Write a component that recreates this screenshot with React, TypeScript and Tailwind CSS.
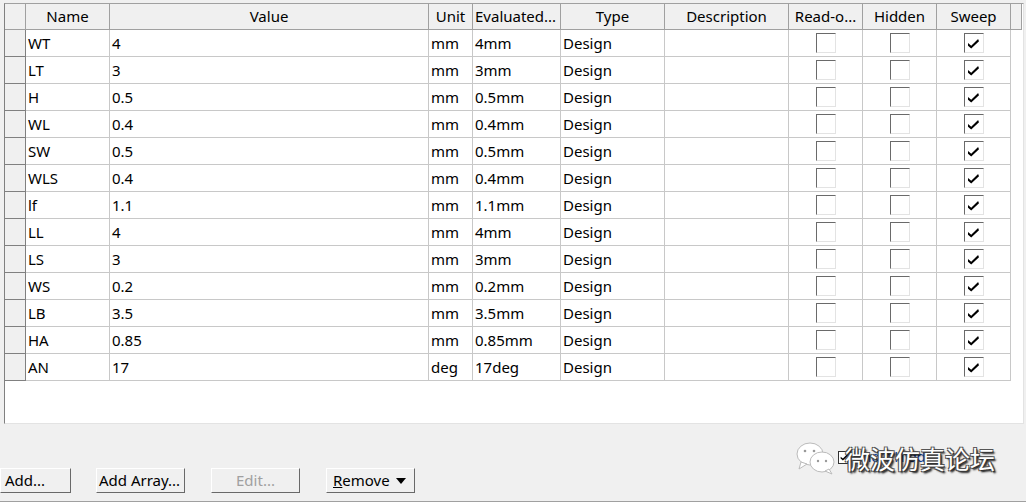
import React from "react";

const rows: [string, string, string, string][] = [
  ["WT", "4", "mm", "4mm"],
  ["LT", "3", "mm", "3mm"],
  ["H", "0.5", "mm", "0.5mm"],
  ["WL", "0.4", "mm", "0.4mm"],
  ["SW", "0.5", "mm", "0.5mm"],
  ["WLS", "0.4", "mm", "0.4mm"],
  ["lf", "1.1", "mm", "1.1mm"],
  ["LL", "4", "mm", "4mm"],
  ["LS", "3", "mm", "3mm"],
  ["WS", "0.2", "mm", "0.2mm"],
  ["LB", "3.5", "mm", "3.5mm"],
  ["HA", "0.85", "mm", "0.85mm"],
  ["AN", "17", "deg", "17deg"],
];

function Tick({ w, h }: { w: number; h: number }) {
  return (
    <svg width={w} height={h} viewBox="0 0 14 12">
      <path d="M1 5.5 L4.5 8.5 L12 1 L13 3.5 L4.5 11.5 L1 8.5 Z" fill="#000" />
    </svg>
  );
}

function Box({ checked }: { checked?: boolean }) {
  return (
    <div className="w-[20px] h-[20px] bg-white border border-t-[#6a6a6a] border-l-[#6a6a6a] border-r-[#e3e3e3] border-b-[#e3e3e3] flex items-center justify-center">
      {checked && <Tick w={13} h={11} />}
    </div>
  );
}

function Hdr({ w, children, left }: { w: string; children?: React.ReactNode; left?: boolean }) {
  return (
    <div
      className={`${w} h-full shrink-0 bg-[#f0f0f0] border-r border-b border-r-[#a0a0a0] border-b-[#a0a0a0] flex items-center ${left ? "justify-start pl-[2px]" : "justify-center"} text-[#000] overflow-hidden whitespace-nowrap`}
    >
      {children}
    </div>
  );
}

function Btn({ children, disabled, className }: { children: React.ReactNode; disabled?: boolean; className?: string }) {
  return (
    <div
      className={`h-[25px] shrink-0 bg-[#f0f0f0] border border-t-white border-l-white border-r-[#696969] border-b-[#696969] flex items-center whitespace-nowrap ${disabled ? "text-[#a0a0a0]" : "text-black"} ${className ?? ""}`}
    >
      {children}
    </div>
  );
}

export default function App() {
  const font = { fontFamily: '"Noto Sans", "Noto Sans CJK SC", sans-serif' };
  return (
    <div className="w-[1026px] h-[503px] bg-[#f0f0f0] relative overflow-hidden text-[15px] leading-none flex flex-col" style={font}>
      <div className="pt-[3px] pl-[4px] pr-[2px] h-[424px] shrink-0">
        <div className="h-[421px] bg-white border border-t-[#a0a0a0] border-l-[#808080] border-r-[#e3e3e3] border-b-[#e3e3e3] overflow-hidden">
          <div className="flex h-[26px]">
            <Hdr w="w-[21px]"> </Hdr>
            <Hdr w="w-[84px]">Name</Hdr>
            <Hdr w="w-[319px]">Value</Hdr>
            <Hdr w="w-[44px]">Unit</Hdr>
            <Hdr w="w-[88px]" left>Evaluated...</Hdr>
            <Hdr w="w-[104px]">Type</Hdr>
            <Hdr w="w-[124px]">Description</Hdr>
            <Hdr w="w-[74px]">Read-o...</Hdr>
            <Hdr w="w-[74px]">Hidden</Hdr>
            <Hdr w="w-[74px]">Sweep</Hdr>
            <Hdr w="w-[11px]"> </Hdr>
          </div>
          {rows.map((r) => (
            <div key={r[0]} className="flex h-[27px]">
              <div className="w-[21px] shrink-0 bg-[#f0f0f0] border-r border-b border-r-[#808080] border-b-[#808080]" />
              <div className="w-[84px] shrink-0 border-r border-b border-[#c8c8c8] flex items-center pl-[2px]">{r[0]}</div>
              <div className="w-[319px] shrink-0 border-r border-b border-[#c8c8c8] flex items-center pl-[2px]">{r[1]}</div>
              <div className="w-[44px] shrink-0 border-r border-b border-[#c8c8c8] flex items-center pl-[2px]">{r[2]}</div>
              <div className="w-[88px] shrink-0 border-r border-b border-[#c8c8c8] flex items-center pl-[2px]">{r[3]}</div>
              <div className="w-[104px] shrink-0 border-r border-b border-[#c8c8c8] flex items-center pl-[2px]">Design</div>
              <div className="w-[124px] shrink-0 border-r border-b border-[#c8c8c8]" />
              <div className="w-[74px] shrink-0 border-r border-b border-[#c8c8c8] flex items-center justify-center"><Box /></div>
              <div className="w-[74px] shrink-0 border-r border-b border-[#c8c8c8] flex items-center justify-center"><Box /></div>
              <div className="w-[74px] shrink-0 border-r border-b border-[#c8c8c8] flex items-center justify-center"><Box checked /></div>
            </div>
          ))}
        </div>
      </div>

      {/* show checkbox row */}
      <div className="h-[44px] shrink-0 flex items-center pt-[22px] pl-[838px] gap-[4px]">
        <div className="w-[13px] h-[13px] bg-white border border-[#333] flex items-center justify-center">
          <Tick w={9} h={8} />
        </div>
        <span className="text-[#0a3fa0] text-[14px]">Show Hidden</span>
      </div>

      {/* buttons */}
      <div className="flex h-[25px] shrink-0">
        <Btn className="w-[71px] pl-[4px]">Add...</Btn>
        <Btn className="w-[89px] ml-[25px] pl-[2px]">Add Array...</Btn>
        <Btn disabled className="w-[89px] ml-[26px] justify-center">Edit...</Btn>
        <Btn className="w-[89px] ml-[26px] pl-[6px] gap-[6px]">
          <span><span className="underline">R</span>emove</span>
          <svg width="10" height="6" viewBox="0 0 10 6"><path d="M0 0 H10 L5 6 Z" fill="#000" /></svg>
        </Btn>
      </div>
      <div className="flex-1" />
      <div className="h-[2px] shrink-0 border-t border-[#a0a0a0] bg-white" />

      {/* watermark */}
      <div className="absolute left-[795px] top-[441px] flex items-center gap-[8px] pointer-events-none">
        <svg width="42" height="34" viewBox="0 0 42 34">
          <ellipse cx="15" cy="13" rx="13" ry="11" fill="#fff" stroke="#bbb" strokeWidth="1" />
          <path d="M6 21 L4 28 L12 23 Z" fill="#fff" stroke="#bbb" strokeWidth="1" />
          <circle cx="10" cy="10" r="1.3" fill="#999" />
          <circle cx="19" cy="10" r="1.3" fill="#999" />
          <ellipse cx="27" cy="21" rx="12" ry="10" fill="#fff" stroke="#bbb" strokeWidth="1" />
          <path d="M34 28 L37 33 L30 30 Z" fill="#fff" stroke="#bbb" strokeWidth="1" />
          <circle cx="23" cy="20" r="1.2" fill="#999" />
          <circle cx="31" cy="20" r="1.2" fill="#999" />
        </svg>
        <span
          className="text-[25px] text-white leading-none [text-shadow:1px_1px_0_#333,-1px_-1px_0_#555,1px_-1px_0_#555,-1px_1px_0_#555,2px_2px_2px_#000]"
          style={{ fontFamily: '"Noto Sans CJK SC", sans-serif' }}
        >
          微波仿真论坛
        </span>
      </div>
    </div>
  );
}
